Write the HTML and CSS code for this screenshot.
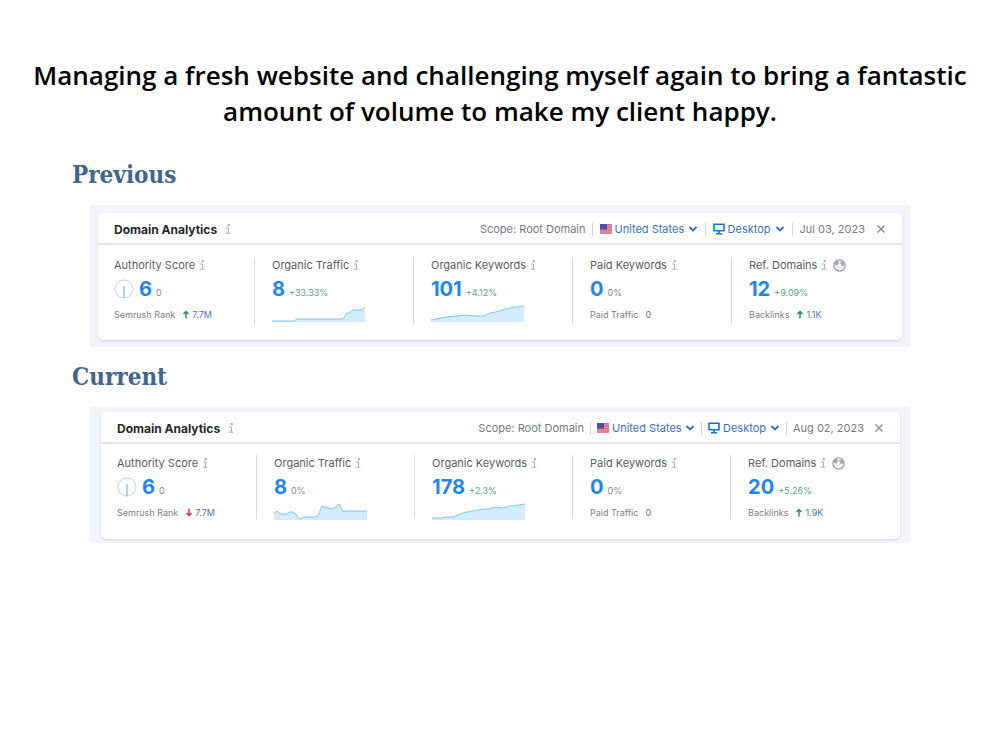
FILE: index.html
```
<!DOCTYPE html>
<html lang="en">

<head>
    <meta charset="UTF-8">
    <meta name="viewport" content="width=device-width, initial-scale=1.0">
    <title>Domain Analytics: Previous and Current</title>
    <link rel="stylesheet" href="styles.css">
</head>

<body>

    <!-- Shared icons -->
    <svg class="sprite" aria-hidden="true">
        <symbol id="info" viewBox="0 0 6 10">
            <path d="M3 .5h1.4v1.4H3zM1 4h2.4v4.8M.6 9.2h4.8" />
        </symbol>
        <symbol id="chevron" viewBox="0 0 10 8">
            <path d="M1.5 2 5 5.5 8.500 2" fill="none" stroke="currentColor" stroke-width="1.8" />
        </symbol>
        <symbol id="flag" viewBox="0 0 12 10">
            <path fill="#d9707a" d="M0 0h12v10H0z" />
            <path stroke="#e6a3aa" stroke-width=".8" d="M0 2h12M0 4.500h12M0 7h12M0 9h12" />
            <path fill="#4a4fae" d="M0 0h7v5.500H0z" />
        </symbol>
        <symbol id="desktop" viewBox="0 0 12 12">
            <path d="M1 1.200h10v6.600H1zM6 8v2.500M3 10.800h6" fill="none" stroke="#1a73d0" stroke-width="1.6" />
        </symbol>
        <symbol id="close" viewBox="0 0 10 10">
            <path d="M1.500 1.500l7 7M8.500 1.500l-7 7" fill="none" stroke="#8f939b" stroke-width="1.5" />
        </symbol>
        <symbol id="globe" viewBox="0 0 12 12">
            <circle cx="6" cy="6" r="5.200" fill="#f4f4f6" stroke="#9a9ca5" stroke-width="1.1" />
            <path fill="#a3a5ad" d="M1.500 3 4 1.800l1.500 1L5 4.500 3.800 6.300 2 5zM7 2.200l2.200.5 1.300 2.300-1.200 1.600-1.500-.6L7.500 4.600 6.700 4z" />
        </symbol>
        <symbol id="gauge" viewBox="0 0 20 20">
            <circle cx="10" cy="10" r="9" fill="none" stroke="#d9dce2" stroke-width="1.3" />
            <path d="M10 7v12" stroke="#7cc4f7" stroke-width="1.4" />
        </symbol>
        <symbol id="arrow" viewBox="0 0 8 9">
            <path d="M4 8.500V1.500M1.500 4 4 1.500 6.500 4" fill="none" stroke="currentColor" stroke-width="1.4" />
        </symbol>
    </svg>

    <main>
        <h1>Managing a fresh website and challenging myself again to bring a fantastic amount of volume to make my client happy.</h1>

        <section>
            <h2>Previous</h2>
            <div class="panel">
                <article class="card">
                    <header class="card-header">
                        <h3>Domain Analytics</h3>
                        <button class="info" aria-label="About domain analytics"><svg><use href="#info" /></svg></button>
                        <div class="filters">
                            <span class="filter">Scope: Root Domain</span>
                            <label class="filter">
                                <svg class="flag"><use href="#flag" /></svg>
                                <select aria-label="Country"><option>United States</option></select>
                                <svg class="chevron"><use href="#chevron" /></svg>
                            </label>
                            <label class="filter">
                                <svg class="desktop"><use href="#desktop" /></svg>
                                <select aria-label="Device"><option>Desktop</option></select>
                                <svg class="chevron"><use href="#chevron" /></svg>
                            </label>
                            <span class="filter">Jul 03, 2023</span>
                        </div>
                        <button class="close" aria-label="Close"><svg><use href="#close" /></svg></button>
                    </header>
                    <div class="metrics">
                        <div class="metric">
                            <div class="label">Authority Score <button class="info" aria-label="About authority score"><svg><use href="#info" /></svg></button></div>
                            <div class="value"><svg class="gauge"><use href="#gauge" /></svg><strong>6</strong><span>0</span></div>
                            <div class="foot">Semrush Rank <svg class="arrow up"><use href="#arrow" /></svg><a href="#">7.7M</a></div>
                        </div>
                        <div class="metric">
                            <div class="label">Organic Traffic <button class="info" aria-label="About organic traffic"><svg><use href="#info" /></svg></button></div>
                            <div class="value"><strong>8</strong><span class="gain">+33.33%</span></div>
                            <svg class="spark" viewBox="0 0 93 17">
                                <path class="area" d="M0 16H22L25 14H71L75 8 77 8 81 5H90L93 2V17H0z" />
                                <path class="line" d="M0 16H22L25 14H71L75 8 77 8 81 5H90L93 2" />
                            </svg>
                        </div>
                        <div class="metric">
                            <div class="label">Organic Keywords <button class="info" aria-label="About organic keywords"><svg><use href="#info" /></svg></button></div>
                            <div class="value"><strong>101</strong><span class="gain">+4.12%</span></div>
                            <svg class="spark" viewBox="0 0 93 17">
                                <path class="area" d="M0 15 15 12 35 10 44 11 53 11 59 8 65 7 74 4 78 4 81 2 86 2 93 1V17H0z" />
                                <path class="line" d="M0 15 15 12 35 10 44 11 53 11 59 8 65 7 74 4 78 4 81 2 86 2 93 1" />
                            </svg>
                        </div>
                        <div class="metric">
                            <div class="label">Paid Keywords <button class="info" aria-label="About paid keywords"><svg><use href="#info" /></svg></button></div>
                            <div class="value"><strong>0</strong><span>0%</span></div>
                            <div class="foot">Paid Traffic <a href="#">0</a></div>
                        </div>
                        <div class="metric">
                            <div class="label">Ref. Domains <button class="info" aria-label="About referring domains"><svg><use href="#info" /></svg></button><svg class="globe"><use href="#globe" /></svg></div>
                            <div class="value"><strong>12</strong><span class="gain">+9.09%</span></div>
                            <div class="foot">Backlinks <svg class="arrow up"><use href="#arrow" /></svg><a href="#">1.1K</a></div>
                        </div>
                    </div>
                </article>
            </div>
        </section>

        <section>
            <h2>Current</h2>
            <div class="panel current">
                <article class="card">
                    <header class="card-header">
                        <h3>Domain Analytics</h3>
                        <button class="info" aria-label="About domain analytics"><svg><use href="#info" /></svg></button>
                        <div class="filters">
                            <span class="filter">Scope: Root Domain</span>
                            <label class="filter">
                                <svg class="flag"><use href="#flag" /></svg>
                                <select aria-label="Country"><option>United States</option></select>
                                <svg class="chevron"><use href="#chevron" /></svg>
                            </label>
                            <label class="filter">
                                <svg class="desktop"><use href="#desktop" /></svg>
                                <select aria-label="Device"><option>Desktop</option></select>
                                <svg class="chevron"><use href="#chevron" /></svg>
                            </label>
                            <span class="filter">Aug 02, 2023</span>
                        </div>
                        <button class="close" aria-label="Close"><svg><use href="#close" /></svg></button>
                    </header>
                    <div class="metrics">
                        <div class="metric">
                            <div class="label">Authority Score <button class="info" aria-label="About authority score"><svg><use href="#info" /></svg></button></div>
                            <div class="value"><svg class="gauge"><use href="#gauge" /></svg><strong>6</strong><span>0</span></div>
                            <div class="foot">Semrush Rank <svg class="arrow down"><use href="#arrow" /></svg><a href="#">7.7M</a></div>
                        </div>
                        <div class="metric">
                            <div class="label">Organic Traffic <button class="info" aria-label="About organic traffic"><svg><use href="#info" /></svg></button></div>
                            <div class="value"><strong>8</strong><span>0%</span></div>
                            <svg class="spark" viewBox="0 0 93 17">
                                <path class="area" d="M0 10 3 8 6 11 12 11 16 9 18 9 22 11 24 15 27 16 30 14 41 14 44 13 48 3 54 5 59 6 65 1 69 9 72 8 93 8V17H0z" />
                                <path class="line" d="M0 10 3 8 6 11 12 11 16 9 18 9 22 11 24 15 27 16 30 14 41 14 44 13 48 3 54 5 59 6 65 1 69 9 72 8 93 8" />
                            </svg>
                        </div>
                        <div class="metric">
                            <div class="label">Organic Keywords <button class="info" aria-label="About organic keywords"><svg><use href="#info" /></svg></button></div>
                            <div class="value"><strong>178</strong><span class="gain">+2.3%</span></div>
                            <svg class="spark" viewBox="0 0 93 17">
                                <path class="area" d="M0 15 9 15 16 14 21 14 28 11 35 9 41 8 52 6 57 6 63 4 72 5 77 3 81 3 93 1V17H0z" />
                                <path class="line" d="M0 15 9 15 16 14 21 14 28 11 35 9 41 8 52 6 57 6 63 4 72 5 77 3 81 3 93 1" />
                            </svg>
                        </div>
                        <div class="metric">
                            <div class="label">Paid Keywords <button class="info" aria-label="About paid keywords"><svg><use href="#info" /></svg></button></div>
                            <div class="value"><strong>0</strong><span>0%</span></div>
                            <div class="foot">Paid Traffic <a href="#">0</a></div>
                        </div>
                        <div class="metric">
                            <div class="label">Ref. Domains <button class="info" aria-label="About referring domains"><svg><use href="#info" /></svg></button><svg class="globe"><use href="#globe" /></svg></div>
                            <div class="value"><strong>20</strong><span class="gain">+5.26%</span></div>
                            <div class="foot">Backlinks <svg class="arrow up"><use href="#arrow" /></svg><a href="#">1.9K</a></div>
                        </div>
                    </div>
                </article>
            </div>
        </section>
    </main>

</body>

</html>
```
FILE: styles.css
```
* {
    box-sizing: border-box;
}

body {
    margin: 0;
    background-color: #fff;
    font-family: Inter, Arial, sans-serif;
    font-size: 11px;
    color: #777a82;
}

main {
    padding: 57px 24px;
}

h1 {
    margin: 0 0 30px;
    font-family: "Open Sans", "Noto Sans", sans-serif;
    font-size: 26px;
    font-weight: 600;
    line-height: 36px;
    text-align: center;
    color: #000;
}

h2 {
    margin: 0 0 14px 48px;
    font-family: "DejaVu Serif Condensed", "DejaVu Serif", serif;
    font-size: 24px;
    line-height: 32px;
    color: #42658f;
}

h3 {
    margin: 0;
    font-size: 12px;
    font-weight: 700;
    color: #25272b;
}

button {
    display: flex;
    padding: 0;
    border: 0;
    background: none;
    cursor: pointer;
}

.sprite {
    display: none;
}

.panel {
    margin: 0 66px 14px;
    padding: 8px 8px 7px;
    background-color: #f3f4f9;
}

.card {
    background-color: #fff;
    border-radius: 5px;
    box-shadow: 0 1px 2px rgba(30, 40, 70, 0.16);
}

.card-header {
    display: flex;
    align-items: center;
    height: 32px;
    padding: 2px 16px 0;
    border-bottom: 2px solid #e4e5e9;
}

.card-header .info {
    margin-left: 8px;
}

.info svg {
    width: 6px;
    height: 10px;
    fill: none;
    stroke: #a5a8af;
    stroke-width: 1;
}

.filters {
    display: flex;
    margin-left: auto;
}

.filter {
    display: flex;
    align-items: center;
    gap: 3px;
    height: 13px;
    padding: 0 7px;
    white-space: nowrap;
}

.filter:first-child {
    padding-right: 6px;
}

.filter + .filter {
    border-left: 1px solid #d4d6db;
}

select {
    appearance: none;
    padding: 0;
    border: 0;
    background: none;
    font: inherit;
    color: #3d70c4;
    cursor: pointer;
}

.flag {
    width: 12px;
    height: 10px;
}

.desktop {
    width: 12px;
    height: 12px;
}

.chevron {
    width: 10px;
    height: 8px;
    color: #2a6fd0;
}

.close {
    margin-left: 4px;
}

.close svg {
    width: 10px;
    height: 10px;
}

.metrics {
    display: grid;
    grid-template-columns: 156fr 159fr 159fr 159fr 171fr;
    padding: 12px 0 15px;
}

.metric {
    height: 68px;
    padding-left: 17px;
    border-left: 1px solid #d9dbe0;
}

.metric:first-child {
    padding-left: 16px;
    border-left: 0;
}

.label {
    display: flex;
    align-items: center;
    gap: 4px;
    height: 16px;
    color: #5b5d62;
}

.value {
    display: flex;
    align-items: baseline;
    gap: 4px;
    height: 32px;
    line-height: 32px;
    font-size: 9px;
    color: #85888f;
}

.value strong {
    font-size: 20px;
    color: #1f86ee;
}

.gauge {
    align-self: center;
    width: 20px;
    height: 20px;
    margin-right: 1px;
}

.gain {
    color: #55a581;
}

.foot {
    display: flex;
    align-items: center;
    gap: 7px;
    height: 18px;
    font-size: 9px;
    color: #7d8087;
}

.foot a {
    color: #4a74c2;
    text-decoration: none;
}

.arrow {
    width: 8px;
    height: 9px;
    margin-right: -5px;
}

.up {
    color: #238a62;
}

.down {
    color: #d12c52;
    transform: rotate(180deg);
}

.globe {
    width: 13px;
    height: 13px;
    margin-left: 2px;
}

.spark {
    display: block;
    width: 93px;
    height: 17px;
}

.area {
    fill: #d3edfd;
}

.line {
    fill: none;
    stroke: #7fc6f2;
    stroke-width: 1;
}

/* The second panel is a little tighter */
.current {
    padding: 5px 10px 4px 11px;
}

.current .filter {
    padding: 0 6px;
}

.current .metrics {
    padding: 11px 0 20px;
}

.current .metric {
    height: 64px;
}

@media (max-width: 800px) {
    h2 {
        margin-left: 0;
    }

    .panel {
        margin: 0 0 15px;
    }

    .card-header {
        height: auto;
        flex-wrap: wrap;
    }

    .filters {
        flex-wrap: wrap;
    }

    .metrics {
        grid-template-columns: 1fr 1fr;
        gap: 12px 0;
    }
}
```
